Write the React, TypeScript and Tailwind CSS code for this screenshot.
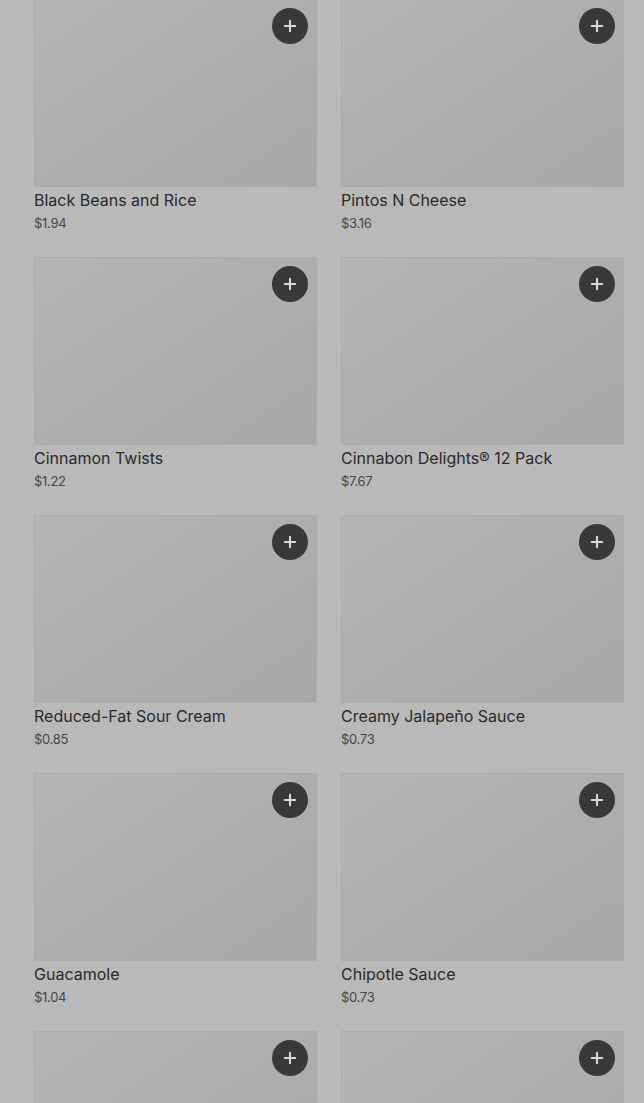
import { Plus } from "lucide-react";

type Item = {
  name?: string;
  price?: string;
};

// last row is only peeking in at the bottom of the screen
const items: Item[] = [
  { name: "Black Beans and Rice", price: "$1.94" },
  { name: "Pintos N Cheese", price: "$3.16" },
  { name: "Cinnamon Twists", price: "$1.22" },
  { name: "Cinnabon Delights® 12 Pack", price: "$7.67" },
  { name: "Reduced-Fat Sour Cream", price: "$0.85" },
  { name: "Creamy Jalapeño Sauce", price: "$0.73" },
  { name: "Guacamole", price: "$1.04" },
  { name: "Chipotle Sauce", price: "$0.73" },
  {},
  {},
];

const App = () => {
  return (
    <div
      className="h-screen bg-[#b9b9b9] overflow-hidden"
      style={{ fontFamily: "Inter, 'Open Sans', sans-serif" }}
    >
      <ul className="grid grid-cols-2 gap-x-6 gap-y-6 pl-[34px] pr-5 -mt-px">
        {items.map((it, i) => (
          <li key={i} className="flex flex-col">
            <div className="relative h-[188px] bg-gradient-to-br from-[#b5b5b5] to-[#a7a7a7] border border-[#ababab]">
              <button className="absolute top-[8px] right-[8px] w-9 h-9 rounded-full bg-[#393939] flex items-center justify-center text-[#d8d8d8]">
                <Plus size={18} strokeWidth={2.75} />
              </button>
            </div>
            {it.name && (
              <>
                <h3 className="pt-px text-[16px] leading-6 text-[#2a2a2a] font-normal">
                  {it.name}
                </h3>
                <p className="mt-px text-[13px] leading-5 text-[#474747] tracking-[-0.3px]">
                  {it.price}
                </p>
              </>
            )}
          </li>
        ))}
      </ul>
    </div>
  );
};

export default App;
